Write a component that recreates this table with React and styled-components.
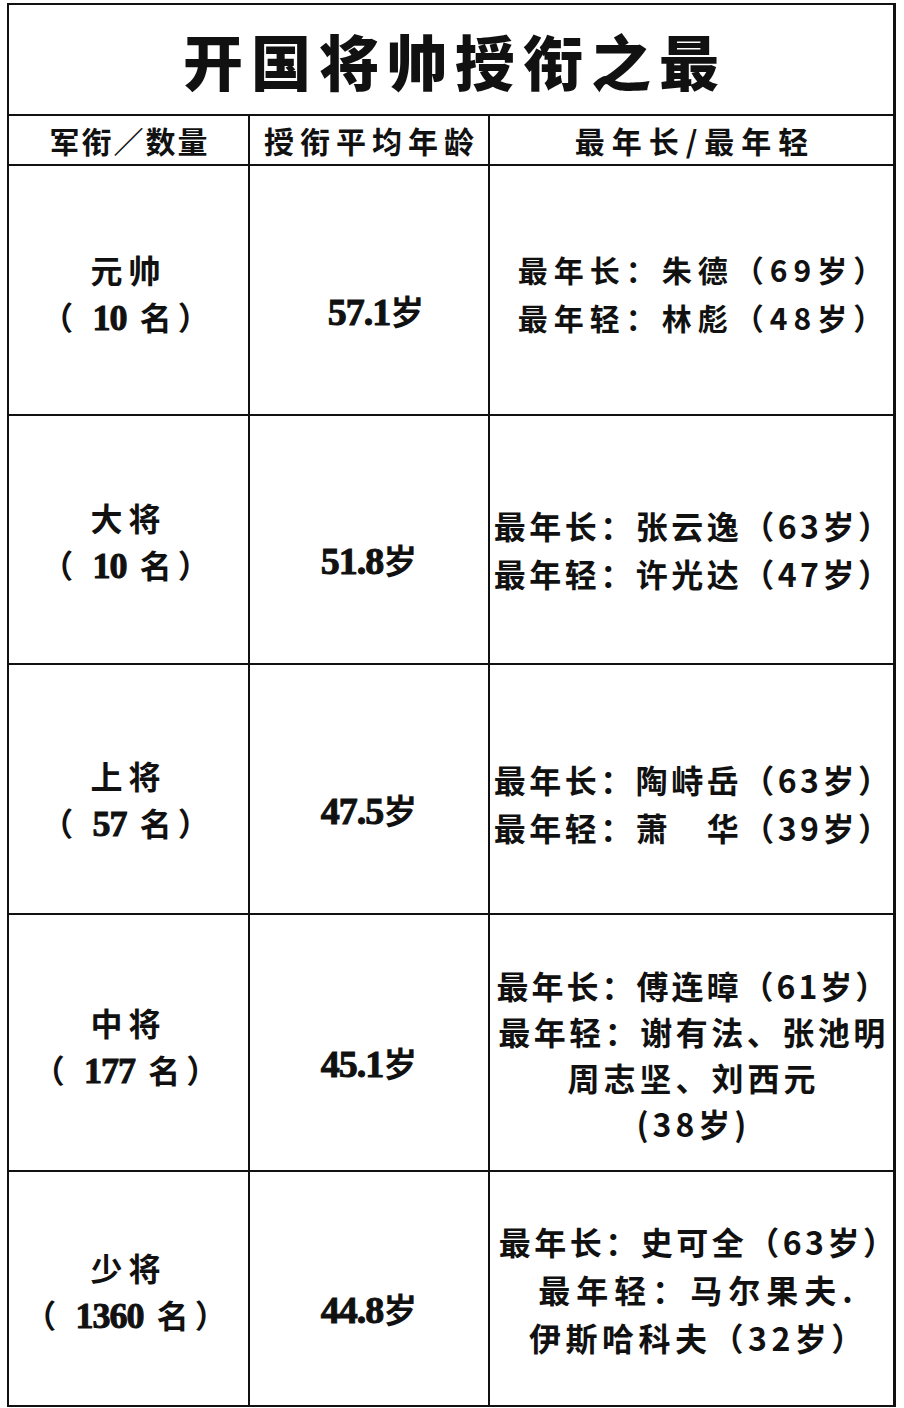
import React from "react";
import styled, { createGlobalStyle } from "styled-components";

const GlobalStyle = createGlobalStyle`
  html, body {
    margin: 0;
    padding: 0;
    background: #fff;
  }
  body {
    font-family: "Noto Sans CJK SC", "Noto Sans", sans-serif;
    color: #111;
  }
`;

const Frame = styled.div`
  width: 889px;
  margin: 3px 0 0 7px;
  border: 2px solid #111;
  border-right-width: 3px;
  box-sizing: border-box;
  background: #fff;
`;

const Title = styled.div`
  height: 109px;
  border-bottom: 2px solid #111;
  display: flex;
  align-items: center;
  justify-content: center;
  font-size: 60px;
  font-weight: 900;
  letter-spacing: 8px;
  padding-left: 8px;
`;

const Grid = styled.div`
  display: grid;
  grid-template-columns: 241px 240px 1fr;
  grid-template-rows: 50px 250px 249px 250px 257px 233px;
`;

const Cell = styled.div`
  border-right: ${(p) => (p.$last ? "none" : "2px solid #111")};
  border-bottom: ${(p) => (p.$bottom ? "none" : "2px solid #111")};
  display: flex;
  flex-direction: column;
  align-items: center;
  justify-content: center;
  text-align: center;
  min-width: 0;
  padding-top: ${(p) => p.$offset || 0}px;
  padding-left: ${(p) => p.$shift || 0}px;
  box-sizing: border-box;
`;

const HeadText = styled.div`
  font-size: 30px;
  font-weight: 700;
  letter-spacing: ${(p) => p.$spacing || 2}px;
  padding-left: ${(p) => p.$spacing || 2}px;
  white-space: nowrap;
`;

const RankLine = styled.div`
  font-size: 32px;
  font-weight: 700;
  line-height: 47px;
  letter-spacing: 6px;
  white-space: nowrap;
`;

const Num = styled.span`
  font-family: "Liberation Serif", "DejaVu Serif", serif;
  font-weight: 700;
  letter-spacing: -1px;
  font-size: ${(p) => p.$size || 36}px;
  -webkit-text-stroke: 1px #111;
`;

const Age = styled.div`
  font-size: 34px;
  font-weight: 700;
  white-space: nowrap;
  padding-left: ${(p) => p.$shift || 0}px;
`;

const InfoLine = styled.div`
  font-size: ${(p) => p.$size || 32}px;
  font-weight: 700;
  line-height: ${(p) => p.$lh || 48}px;
  letter-spacing: ${(p) => p.$spacing}px;
  white-space: nowrap;
`;

const rows = [
  {
    rank: "元帅",
    count: "10",
    age: "57.1",
    shift: 14,
    rankOff: 8,
    infoOff: 6,
    infoShift: 24,
    lines: [
      { t: "最年长：朱德（69岁）", s: 6, size: 30 },
      { t: "最年轻：林彪（48岁）", s: 6, size: 30 },
    ],
  },
  {
    rank: "大将",
    count: "10",
    age: "51.8",
    rankOff: 4,
    infoOff: 18,
    infoShift: 4,
    lines: [
      { t: "最年长：张云逸（63岁）", s: 3.5 },
      { t: "最年轻：许光达（47岁）", s: 3.5 },
    ],
  },
  {
    rank: "上将",
    count: "57",
    age: "47.5",
    rankOff: 22,
    infoOff: 28,
    infoShift: 4,
    lines: [
      { t: "最年长：陶峙岳（63岁）", s: 3.5 },
      { t: "最年轻：萧　华（39岁）", s: 3.5 },
    ],
  },
  {
    rank: "中将",
    count: "177",
    age: "45.1",
    lh: 46,
    rankOff: 8,
    infoOff: 22,
    infoShift: 4,
    lines: [
      { t: "最年长：傅连暲（61岁）", s: 3 },
      { t: "最年轻：谢有法、张池明", s: 3.5 },
      { t: "周志坚、刘西元", s: 4 },
      { t: "(38岁)", s: 4 },
    ],
  },
  {
    rank: "少将",
    count: "1360",
    age: "44.8",
    rankOff: 6,
    infoOff: 0,
    infoShift: 14,
    lines: [
      { t: "最年长：史可全（63岁）", s: 3.5 },
      { t: "最年轻：马尔果夫.", s: 6 },
      { t: "伊斯哈科夫（32岁）", s: 4.5 },
    ],
  },
];

export default function App() {
  return (
    <>
      <GlobalStyle />
      <Frame>
        <Title>开国将帅授衔之最</Title>
        <Grid>
          <Cell>
            <HeadText $spacing={2}>军衔／数量</HeadText>
          </Cell>
          <Cell>
            <HeadText $spacing={6}>授衔平均年龄</HeadText>
          </Cell>
          <Cell $last>
            <HeadText $spacing={7}>最年长/最年轻</HeadText>
          </Cell>
          {rows.map((r, i) => {
            const isLast = i === rows.length - 1;
            return (
              <React.Fragment key={r.rank}>
                <Cell $bottom={isLast} $offset={r.rankOff}>
                  <RankLine>{r.rank}</RankLine>
                  <RankLine>
                    （ <Num>{r.count}</Num> 名）
                  </RankLine>
                </Cell>
                <Cell $bottom={isLast} $offset={40}>
                  <Age $shift={r.shift}>
                    <Num $size={38}>{r.age}</Num>岁
                  </Age>
                </Cell>
                <Cell
                  $bottom={isLast}
                  $last
                  $offset={r.infoOff}
                  $shift={r.infoShift}
                >
                  {r.lines.map((l) => (
                    <InfoLine
                      key={l.t}
                      $spacing={l.s}
                      $size={l.size}
                      $lh={r.lh}
                    >
                      {l.t}
                    </InfoLine>
                  ))}
                </Cell>
              </React.Fragment>
            );
          })}
        </Grid>
      </Frame>
    </>
  );
}
